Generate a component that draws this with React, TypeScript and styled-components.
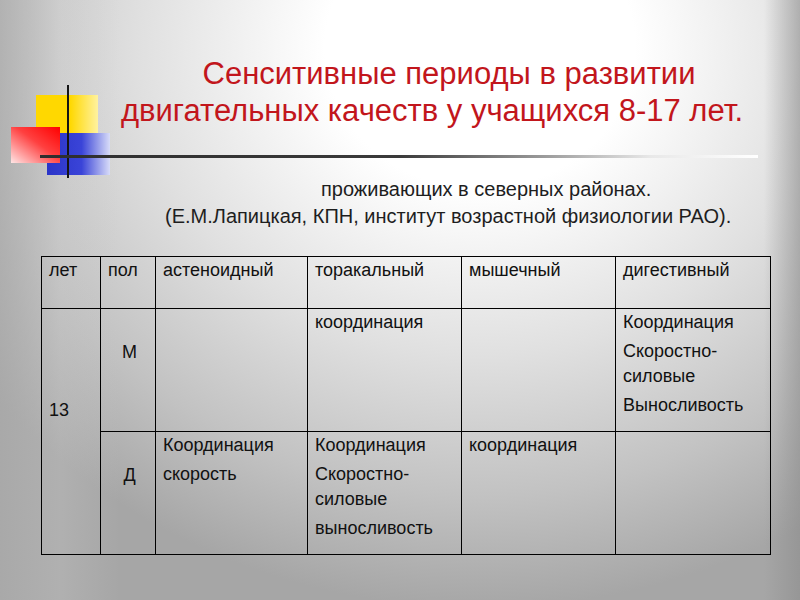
import React from "react";
import styled, { createGlobalStyle } from "styled-components";

const Global = createGlobalStyle`
  html, body { margin: 0; padding: 0; }
  body { font-family: "Liberation Sans", Arial, sans-serif; }
  #root { width: 800px; height: 600px; overflow: hidden; }
`;

const Slide = styled.div`
  position: relative;
  width: 800px;
  height: 600px;
  box-sizing: border-box;
  background:
    linear-gradient(to right, rgba(140,140,140,0) 0px, rgba(140,140,140,0) 764px, rgba(140,140,140,0.6) 800px),
    linear-gradient(to right, rgba(170,170,170,0.7) 0px, rgba(200,200,200,0.3) 60px, rgba(255,255,255,0) 120px),
    radial-gradient(ellipse 620px 560px at 60% 8%, #ffffff 0%, #ffffff 25%, #e0e0e0 55%, #c2c2c2 80%, #a6a6a6 100%);
  display: flex;
  flex-direction: column;
`;

const Header = styled.header`
  position: relative;
  height: 170px;
  display: flex;
  flex-direction: column;
`;

const Logo = styled.svg`
  position: absolute;
  left: 0;
  top: 80px;
`;

const Title = styled.h1`
  margin: 0;
  padding: 55px 12px 0 110px;
  font-family: "Liberation Sans", Arial, sans-serif;
  font-weight: normal;
  font-size: 31px;
  line-height: 37px;
  color: #c2161c;
  text-align: center;
  white-space: nowrap;
`;

const TitleLine = styled.span<{ $shift: number }>`
  display: block;
  padding-right: ${(p) => p.$shift}px;
`;

const Rule = styled.div`
  position: relative;
  margin: 26px 0 0 40px;
  width: 718px;
  height: 3px;
  background: linear-gradient(to right, #2e2e2e 0%, #3a3a3a 50%, #9a9a9a 70%, #e8e8e8 85%, #ffffff 100%);
`;

const Source = styled.div`
  padding: 6px 0 0 0;
  font-family: "Liberation Sans", Arial, sans-serif;
  font-size: 20px;
  line-height: 27px;
  color: #1e1e1e;
`;

const SourceLine = styled.div<{ $indent: number }>`
  padding-left: ${(p) => p.$indent}px;
  white-space: nowrap;
`;

const Table = styled.table`
  margin: 26px 0 0 41px;
  border-collapse: collapse;
  table-layout: fixed;
  width: 729px;
  font-family: "Liberation Sans", Arial, sans-serif;
  font-size: 18px;
  color: #111;
`;

const Cell = styled.td<{ $center?: boolean; $padTop?: number }>`
  border: 1px solid #000;
  vertical-align: top;
  padding: ${(p) => p.$padTop ?? 1}px 4px 0 7px;
  text-align: ${(p) => (p.$center ? "center" : "left")};
  line-height: 25px;
`;

const Para = styled.div`
  & + & { margin-top: 4px; }
`;

const HeaderRow = styled.tr`
  height: 52px;
`;

const BodyRow = styled.tr`
  height: 123px;
`;

const lines = (arr: string[]) => arr.map((t, i) => <Para key={i}>{t}</Para>);

export default function App() {
  return (
    <>
      <Global />
      <Slide>
        <Header>
          <Logo width="120" height="100" viewBox="0 0 120 100">
            <defs>
              <linearGradient id="yel" x1="0" y1="0" x2="1" y2="0">
                <stop offset="0" stopColor="#ffd800" />
                <stop offset="0.55" stopColor="#ffd800" />
                <stop offset="1" stopColor="#fff2a0" />
              </linearGradient>
              <linearGradient id="red" x1="1" y1="0" x2="0" y2="1">
                <stop offset="0" stopColor="#ff0000" />
                <stop offset="0.45" stopColor="#ff4040" />
                <stop offset="1" stopColor="#ffe6e6" />
              </linearGradient>
              <linearGradient id="blu" x1="0" y1="0" x2="1" y2="0">
                <stop offset="0" stopColor="#2a34c8" />
                <stop offset="0.55" stopColor="#3a44d8" />
                <stop offset="1" stopColor="#d8dcf8" />
              </linearGradient>
            </defs>
            <rect x="36" y="15" width="62" height="38" fill="url(#yel)" />
            <rect x="47" y="53" width="63" height="42" fill="url(#blu)" />
            <rect x="11" y="47" width="49" height="36" fill="url(#red)" />
            <rect x="67" y="5" width="2" height="93" fill="#141414" />
          </Logo>
          <Title>
            <TitleLine $shift={0}>Сенситивные периоды в развитии</TitleLine>
            <TitleLine $shift={34}>двигательных качеств у учащихся 8-17 лет.</TitleLine>
          </Title>
          <Rule />
        </Header>
        <Source>
          <SourceLine $indent={321}>проживающих в северных районах.</SourceLine>
          <SourceLine $indent={165}>(Е.М.Лапицкая, КПН, институт возрастной физиологии РАО).</SourceLine>
        </Source>
        <Table>
          <colgroup>
            <col style={{ width: 59 }} />
            <col style={{ width: 55 }} />
            <col style={{ width: 152 }} />
            <col style={{ width: 154 }} />
            <col style={{ width: 154 }} />
            <col style={{ width: 155 }} />
          </colgroup>
          <tbody>
            <HeaderRow>
              <Cell>лет</Cell>
              <Cell>пол</Cell>
              <Cell>астеноидный</Cell>
              <Cell>торакальный</Cell>
              <Cell>мышечный</Cell>
              <Cell>дигестивный</Cell>
            </HeaderRow>
            <BodyRow>
              <Cell rowSpan={2} $padTop={89}>13</Cell>
              <Cell $center $padTop={31}>М</Cell>
              <Cell />
              <Cell>{lines(["координация"])}</Cell>
              <Cell />
              <Cell>{lines(["Координация", "Скоростно-силовые", "Выносливость"])}</Cell>
            </BodyRow>
            <BodyRow>
              <Cell $center $padTop={31}>Д</Cell>
              <Cell>{lines(["Координация", "скорость"])}</Cell>
              <Cell>{lines(["Координация", "Скоростно-силовые", "выносливость"])}</Cell>
              <Cell>{lines(["координация"])}</Cell>
              <Cell />
            </BodyRow>
          </tbody>
        </Table>
      </Slide>
    </>
  );
}
